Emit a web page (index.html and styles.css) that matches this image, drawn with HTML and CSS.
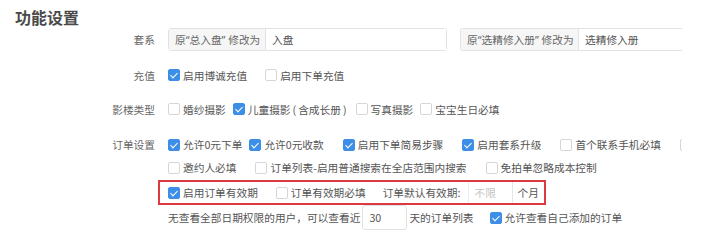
FILE: index.html
```html
<!DOCTYPE html>
<html lang="zh-CN">
<head>
<meta charset="utf-8">
<title>功能设置</title>
<link rel="stylesheet" href="styles.css">
</head>
<body>
<div class="page">
  <h2 class="title">功能设置</h2>

  <div class="row row-suite">
    <div class="label">套系</div>
    <div class="field">
      <div class="igroup g1"><span class="addon a1">原“总入盘” 修改为</span><span class="ival v1">入盘</span></div>
      <div class="igroup g2"><span class="addon a2">原“选精修入册” 修改为</span><span class="ival v2">选精修入册</span></div>
    </div>
  </div>

  <div class="row row-recharge">
    <div class="label">充值</div>
    <div class="field opts">
      <label class="cb"><span class="box on"></span>启用博诚充值</label>
      <label class="cb"><span class="box"></span>启用下单充值</label>
    </div>
  </div>

  <div class="row row-type">
    <div class="label">影楼类型</div>
    <div class="field opts tight">
      <label class="cb"><span class="box"></span>婚纱摄影</label>
      <label class="cb"><span class="box on"></span>儿童摄影<span class="paren">(</span>含成长册<span class="paren">)</span></label>
      <label class="cb"><span class="box"></span>写真摄影</label>
      <label class="cb"><span class="box"></span>宝宝生日必填</label>
    </div>
  </div>

  <div class="row row-order">
    <div class="label">订单设置</div>
    <div class="field opts wide">
      <span class="pair">
        <label class="cb"><span class="box on"></span>允许0元下单</label>
        <label class="cb"><span class="box on"></span>允许0元收款</label>
      </span>
      <label class="cb"><span class="box on"></span>启用下单简易步骤</label>
      <label class="cb"><span class="box on"></span>启用套系升级</label>
      <label class="cb"><span class="box"></span>首个联系手机必填</label>
      <label class="cb"><span class="box"></span></label>
    </div>
  </div>

  <div class="row row-order2">
    <div class="label"></div>
    <div class="field opts wide">
      <label class="cb"><span class="box"></span>邀约人必填</label>
      <label class="cb"><span class="box"></span>订单列表-启用普通搜索在全店范围内搜索</label>
      <label class="cb"><span class="box"></span>免拍单忽略成本控制</label>
    </div>
  </div>

  <div class="row row-valid">
    <div class="label"></div>
    <div class="field">
      <div class="highlight">
        <label class="cb"><span class="box on"></span>启用订单有效期</label>
        <label class="cb cb-gap"><span class="box"></span>订单有效期必填</label>
        <span class="txt default-label">订单默认有效期:</span>
        <span class="igroup g3"><span class="ival v3">不限</span><span class="addon a3">个月</span></span>
      </div>
    </div>
  </div>

  <div class="row row-view">
    <div class="label"></div>
    <div class="field">
      <span class="txt">无查看全部日期权限的用户，可以查看近</span>
      <span class="num">30</span>
      <span class="txt days">天的订单列表</span>
      <label class="cb"><span class="box on"></span>允许查看自己添加的订单</label>
    </div>
  </div>
</div>
</body>
</html>
```

FILE: styles.css
```css
html, body {
  margin: 0;
  padding: 0;
  background: #fff;
}

body {
  font-family: "Noto Sans CJK SC", "Noto Sans", sans-serif;
  font-size: 10.7px;
  color: #555;
  width: 712px;
  height: 247px;
  overflow: hidden;
}

.page {
  width: 682px;
  overflow: hidden;
}

.title {
  margin: 0;
  padding: 8px 0 0 15px;
  font-size: 16px;
  line-height: 18px;
  font-weight: bold;
  color: #4a4a4a;
}

.row {
  display: grid;
  grid-template-columns: 155px auto;
  column-gap: 13px;
  align-items: center;
}

.label {
  text-align: right;
  color: #666;
  white-space: nowrap;
}

.field {
  display: flex;
  align-items: center;
  white-space: nowrap;
}

.row-suite { margin-top: 2px; height: 23px; }
.row-recharge { margin-top: 12px; height: 24px; }
.row-type { margin-top: 10px; height: 24px; }
.row-order { margin-top: 12px; height: 23px; }
.row-order2 { height: 23px; }
.row-valid { margin-top: 1px; height: 25px; }
.row-view { height: 25px; }

/* input groups */
.igroup {
  display: flex;
  align-items: stretch;
  height: 23px;
  box-sizing: border-box;
  border: 1px solid #e2e2e2;
  border-radius: 3px;
}

.addon {
  display: flex;
  align-items: center;
  background: #f6f6f6;
  color: #666;
  padding: 0 6px;
  box-sizing: border-box;
  white-space: nowrap;
  font-family: "Noto Sans", "Noto Sans CJK SC", sans-serif;
}

.ival {
  display: flex;
  align-items: center;
  padding: 0 6px;
  color: #555;
  box-sizing: border-box;
  background: #fff;
}

.g1 { width: 279px; }
.a1 { width: 97px; border-right: 1px solid #e2e2e2; }
.v1 { flex: 1; }

.g2 {
  margin-left: 13px;
  width: 230px;
  border-right: none;
  border-top-right-radius: 0;
  border-bottom-right-radius: 0;
}
.a2 { width: 118px; border-right: 1px solid #e2e2e2; }
.v2 { flex: 1; }

/* checkboxes */
.opts { gap: 18px; }
.opts.tight { gap: 7px; }
.opts.wide { gap: 19px; }
.pair { display: flex; gap: 7px; }

.cb {
  display: inline-flex;
  align-items: center;
  color: #555;
}

.paren { padding: 0 2px; }

.box {
  width: 12px;
  height: 12px;
  box-sizing: border-box;
  border: 1px solid #d6d6d6;
  border-radius: 2px;
  background: #fff;
  margin-right: 3px;
  position: relative;
  flex: none;
}

.box.on {
  background: #3d8ee6;
  border-color: #3d8ee6;
}

.box.on::after {
  content: "";
  position: absolute;
  left: 3px;
  top: 1px;
  width: 3px;
  height: 6px;
  border: solid #fff;
  border-width: 0 1.3px 1.3px 0;
  transform: rotate(45deg);
}

/* highlight box */
.highlight {
  display: flex;
  align-items: center;
  height: 25px;
  box-sizing: border-box;
  border: 2px solid #dc3a3f;
  margin-left: -10px;
  padding: 0 2px 0 8px;
}

.cb-gap { margin-left: 18px; }
.default-label { margin-left: 17px; color: #555; }

.g3 {
  margin-left: 8px;
  height: 21px;
  border-color: #ebebeb;
  border-top: none;
  border-bottom: none;
  border-right: none;
  border-radius: 0;
}
.v3 { width: 44px; color: #c4c4c4; padding-left: 5px; border-right: 1px solid #e6e6e6; }
.a3 { background: #fff; color: #555; padding: 0 5px 0 4px; width: 29px; font-family: "Noto Sans CJK SC", sans-serif; }

/* view row */
.num {
  display: inline-flex;
  align-items: center;
  width: 45px;
  height: 25px;
  box-sizing: border-box;
  border: 1px solid #e2e2e2;
  border-radius: 3px;
  padding-left: 6px;
  margin-left: 2px;
  color: #555;
}

.days { margin-left: 2px; margin-right: 16px; }
```
